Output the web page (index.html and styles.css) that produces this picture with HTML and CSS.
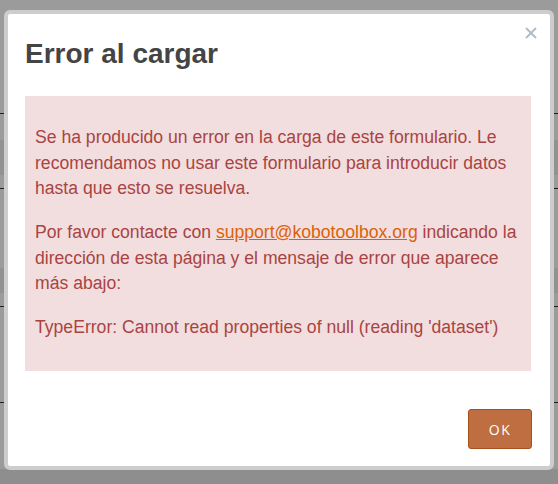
FILE: index.html
```html
<!DOCTYPE html>
<html lang="es">
<head>
  <meta charset="UTF-8">
  <meta name="viewport" content="width=device-width, initial-scale=1.0">
  <title>Error al cargar</title>
  <link rel="stylesheet" href="styles.css">
</head>
<body>
  <div class="backdrop">
    <div class="band" style="height: 113px"></div>
    <div class="rule"></div>
    <div class="band" style="height: 26px"></div>
    <div class="band dark" style="height: 35px"></div>
    <div class="band" style="height: 13px"></div>
    <div class="rule"></div>
    <div class="band" style="height: 79px"></div>
    <div class="band dark" style="height: 25px"></div>
    <div class="band" style="height: 13px"></div>
    <div class="rule"></div>
    <div class="band" style="height: 95px"></div>
    <div class="rule"></div>
    <div class="band" style="height: 66px"></div>
    <div class="band darker" style="height: 20px"></div>
  </div>

  <div class="modal">
    <button class="close" type="button" aria-label="Cerrar">
      <svg width="12" height="12" viewBox="0 0 12 12">
        <path d="M1 1 L11 11 M11 1 L1 11" stroke="#b3bcc6" stroke-width="2" fill="none"/>
      </svg>
    </button>
    <div class="modal-body">
      <h1>Error al cargar</h1>
      <div class="alert">
        <p>Se ha producido un error en la carga de este formulario. Le recomendamos no usar este formulario para introducir datos hasta que esto se resuelva.</p>
        <p>Por favor contacte con <a href="mailto:support@kobotoolbox.org">support@kobotoolbox.org</a> indicando la dirección de esta página y el mensaje de error que aparece más abajo:</p>
        <p>TypeError: Cannot read properties of null (reading 'dataset')</p>
      </div>
    </div>
    <div class="modal-footer">
      <button class="btn-ok" type="button">OK</button>
    </div>
  </div>
</body>
</html>
```

FILE: styles.css
```css
html, body {
  margin: 0;
  padding: 0;
}

body {
  background-color: #9b9b9b;
  font-family: "Liberation Sans", Arial, sans-serif;
  width: 558px;
  height: 484px;
  overflow: hidden;
}

.backdrop {
  display: flex;
  flex-direction: column;
}

.band {
  background-color: #9b9b9b;
}

.band.dark {
  background-color: #929292;
}

.band.darker {
  background-color: #8e8e8e;
}

.rule {
  height: 1px;
  background-color: #1e1e1e;
}

.modal {
  position: fixed;
  top: 10px;
  left: 4px;
  width: 550px;
  height: 460px;
  box-sizing: border-box;
  border: 4px solid #cdcdcd;
  border-radius: 6px;
  background-color: #fff;
  display: flex;
  flex-direction: column;
}

.close {
  position: absolute;
  top: 13px;
  right: 13px;
  padding: 0;
  border: 0;
  background: none;
  line-height: 0;
}

.modal-body {
  padding: 25px 19px 0 17px;
}

h1 {
  margin: 0;
  font-size: 28px;
  line-height: 30.8px;
  font-weight: bold;
  color: #444;
}

.alert {
  margin-top: 26px;
  padding: 29px 10px 30px;
  background-color: #f2dede;
  color: #a94442;
}

.alert p {
  margin: 0 0 18px;
  font-size: 17.6px;
  line-height: 25.7px;
}

.alert p:last-child {
  margin-bottom: 0;
}

.alert a {
  color: #d9620c;
  text-decoration: underline;
}

.modal-footer {
  margin-top: auto;
  display: flex;
  justify-content: flex-end;
  padding: 0 18px 17px;
}

.btn-ok {
  width: 64px;
  height: 40px;
  padding: 0;
  border: 1px solid #a8501c;
  border-radius: 3px;
  background-color: #bf6e42;
  color: #fff;
  font-family: "Open Sans", sans-serif;
  font-size: 14px;
  letter-spacing: 1.5px;
  text-transform: uppercase;
}
```
